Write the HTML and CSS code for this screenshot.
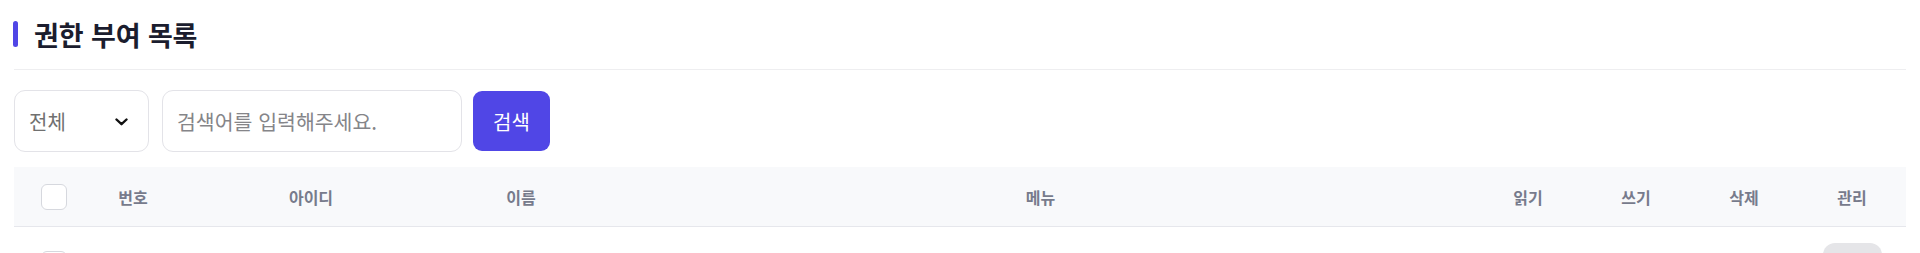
FILE: index.html
```html
<!DOCTYPE html>
<html lang="ko">
<head>
<meta charset="utf-8">
<title>권한 부여 목록</title>
<link rel="stylesheet" href="styles.css">
</head>
<body>
<div class="page">
  <div class="section-head">
    <span class="bar"></span>
    <h1 class="title">권한 부여 목록</h1>
  </div>

  <div class="filters">
    <div class="select">
      <span class="select-text">전체</span>
      <svg class="chev" width="13" height="8" viewBox="0 0 13 8"><path d="M1.5 1.5 L6.5 6.2 L11.5 1.5" fill="none" stroke="#111" stroke-width="2.4" stroke-linecap="round" stroke-linejoin="round"/></svg>
    </div>
    <input class="search" type="text" placeholder="검색어를 입력해주세요.">
    <button class="btn-search" type="button">검색</button>
  </div>

  <div class="table">
    <div class="row head">
      <div class="cell check"><span class="cb"></span></div>
      <div class="cell">번호</div>
      <div class="cell">아이디</div>
      <div class="cell">이름</div>
      <div class="cell">메뉴</div>
      <div class="cell">읽기</div>
      <div class="cell">쓰기</div>
      <div class="cell">삭제</div>
      <div class="cell">관리</div>
    </div>
    <div class="row body">
      <div class="cell check"><span class="cb"></span></div>
      <div class="cell"></div>
      <div class="cell"></div>
      <div class="cell"></div>
      <div class="cell"></div>
      <div class="cell"></div>
      <div class="cell"></div>
      <div class="cell"></div>
      <div class="cell"><span class="pill"></span></div>
    </div>
  </div>
</div>
</body>
</html>
```

FILE: styles.css
```css
* { box-sizing: border-box; }
html, body {
  margin: 0;
  padding: 0;
  background: #ffffff;
  font-family: "Noto Sans CJK KR", "Noto Sans", sans-serif;
  color: #1b1d2e;
  overflow: hidden;
}
.page {
  padding: 0 14px;
}
.section-head {
  height: 70px;
  display: flex;
  align-items: center;
  border-bottom: 1px solid #eeeef0;
  padding-bottom: 1px;
}
.bar {
  width: 5px;
  height: 26px;
  border-radius: 3px;
  background: #5046e6;
  margin-left: -1px;
}
.title {
  margin: 0 0 0 16px;
  font-size: 27px;
  font-weight: 700;
  line-height: 1;
  color: #1b1d2e;
  letter-spacing: -0.1px;
}
.filters {
  margin-top: 20px;
  display: flex;
  align-items: center;
  height: 62px;
}
.select {
  width: 135px;
  height: 62px;
  border: 1px solid #e3e3e8;
  border-radius: 11px;
  display: flex;
  align-items: center;
  justify-content: space-between;
  padding: 0 20px 0 14px;
}
.select-text {
  font-size: 20px;
  color: #707070;
}
.chev { display: block; margin-top: 1px; }
.search {
  margin-left: 13px;
  width: 300px;
  height: 62px;
  border: 1px solid #e3e3e8;
  border-radius: 11px;
  padding: 0 14px;
  font-family: inherit;
  font-size: 20.5px;
  color: #333;
  outline: none;
}
.search::placeholder { color: #858589; }
.btn-search {
  margin-left: 11px;
  width: 77px;
  height: 60px;
  border: 0;
  border-radius: 9px;
  background: #5046e6;
  color: #ffffff;
  font-family: inherit;
  font-size: 20px;
  padding: 0;
}
.table {
  margin-top: 15px;
}
.row {
  display: grid;
  grid-template-columns: 65px 108px 248px 172px 1fr 108px 108px 108px 108px;
  align-items: center;
}
.row.head {
  height: 60px;
  background: #f8f9fb;
  border-bottom: 1px solid #e6e7ec;
}
.row.head .cell {
  font-size: 16px;
  font-weight: 700;
  color: #777b8c;
  text-align: center;
}
.cell.check {
  display: flex;
  padding-left: 27px;
}
.cb {
  display: block;
  width: 26px;
  height: 26px;
  border: 1px solid #d6d8de;
  border-radius: 6px;
  background: #ffffff;
}
.row.body {
  height: 72px;
}
.row.body .cell { display: flex; justify-content: center; }
.row.body .cell.check { justify-content: flex-start; padding-top: 2px; }
.pill {
  display: block;
  width: 59px;
  height: 32px;
  border-radius: 12px;
  background: #e5e5e8;
  margin-top: -8px;
}
```
